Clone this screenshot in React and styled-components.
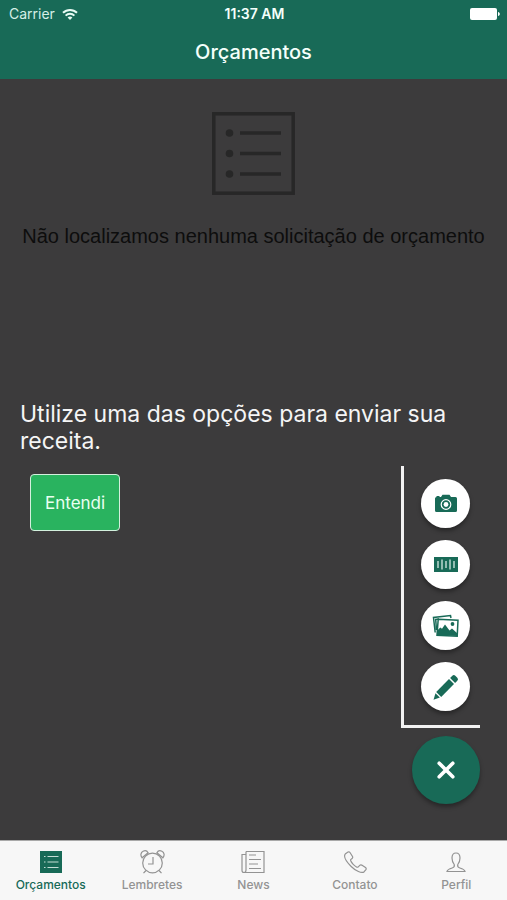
import React from "react";
import styled, { createGlobalStyle } from "styled-components";

const green = "#186a57";

const GlobalStyle = createGlobalStyle`
  *, *::before, *::after { box-sizing: border-box; }
  body { margin: 0; background: #3c3b3c; }
  body, button { font-family: Inter, "Liberation Sans", sans-serif; }
  h1, p { margin: 0; }
  svg { display: block; }
`;

const Screen = styled.div`
  min-height: 100vh;
  display: flex;
  flex-direction: column;
`;

const Header = styled.header`
  background: ${green};
  color: #f4fffb;
`;

const StatusBar = styled.div`
  height: 28px;
  padding: 0 7px 0 9px;
  display: grid;
  grid-template-columns: 1fr auto 1fr;
  align-items: center;
  font-size: 14px;
  line-height: 20px;
`;

const Carrier = styled.div`
  display: flex;
  align-items: center;
  gap: 7px;
  color: #d5efe6;
`;

const Clock = styled.time`
  font-size: 14px;
  font-weight: 600;
`;

const Battery = styled.div`
  justify-self: end;
`;

const TitleBar = styled.div`
  height: 51px;
  padding-bottom: 3px;
  display: flex;
  justify-content: center;
  align-items: center;
`;

const Title = styled.h1`
  font-size: 20px;
  line-height: 24px;
  font-weight: 500;
`;

const Main = styled.main`
  flex: 1;
  display: flex;
  flex-direction: column;
  justify-content: space-between;
  background: #3c3b3c;
`;

const EmptyState = styled.section`
  padding-top: 33px;
  display: flex;
  flex-direction: column;
  align-items: center;
  gap: 28px;
  color: #0d0d0d;
  font-family: "Liberation Sans", Arial, sans-serif;
  font-size: 20px;
  line-height: 26px;
  text-align: center;
`;

const Guide = styled.section`
  padding: 0 27px 36px 20px;
`;

const GuideText = styled.p`
  color: #f5f5f5;
  font-size: 23px;
  line-height: 27px;
`;

const Actions = styled.div`
  margin-top: 11px;
  padding-left: 10px;
  display: flex;
  justify-content: space-between;
  align-items: flex-start;
`;

const ConfirmButton = styled.button`
  margin-top: 8px;
  height: 57px;
  padding: 0 14px;
  border: 1px solid #d3f0dd;
  border-radius: 4px;
  background: #29b35f;
  color: #e9fff1;
  font-size: 17px;
  line-height: 22px;
`;

const SpeedDial = styled.div`
  display: flex;
  flex-direction: column;
  align-items: flex-end;
  gap: 8px;
`;

const Options = styled.div`
  padding: 13px 10px 14px 17px;
  border-left: 3px solid #f2f2f2;
  border-bottom: 3px solid #f2f2f2;
  display: flex;
  flex-direction: column;
  gap: 12px;
`;

const RoundButton = styled.button`
  width: ${(p) => p.$size}px;
  height: ${(p) => p.$size}px;
  padding: 0;
  border: 0;
  border-radius: 50%;
  display: grid;
  place-items: center;
  background: ${(p) => (p.$primary ? green : "#fff")};
  color: ${(p) => (p.$primary ? "#fff" : green)};
  box-shadow: 0 3px 4px rgba(0, 0, 0, 0.35);
`;

const TabBar = styled.nav`
  height: 60px;
  display: grid;
  grid-template-columns: repeat(5, 1fr);
  background: #f7f7f7;
  border-top: 1px solid #a9a9a9;
`;

const Tab = styled.a`
  padding-top: 9px;
  display: flex;
  flex-direction: column;
  align-items: center;
  gap: 3px;
  color: ${(p) => (p.$active ? green : "#939393")};
  font-size: 12px;
  line-height: 16px;
  font-weight: 500;
  text-decoration: none;
`;

const WifiIcon = () => (
  <svg width="16" height="13" viewBox="0 0 16 13" fill="none" stroke="#e8fbf4" strokeWidth="2" aria-hidden="true">
    <path d="M1 4.8C5 .9 11 .9 15 4.8M3.6 7.6c2.5-2.4 6.3-2.4 8.8 0" />
    <path d="M5.6 9.4c1.4-1.3 3.4-1.3 4.8 0L8 12z" fill="#e8fbf4" stroke="none" />
  </svg>
);

const BatteryIcon = () => (
  <svg width="30" height="12" viewBox="0 0 30 12" fill="#fff" role="img" aria-label="Bateria">
    <rect width="27" height="12" rx="2" />
    <path d="M28 4c2.4.6 2.4 3.4 0 4z" />
  </svg>
);

const EmptyListIcon = () => (
  <svg width="83" height="83" viewBox="0 0 83 83" fill="none" stroke="#272727" strokeWidth="3.500" aria-hidden="true">
    <rect x="1.8" y="1.8" width="79.4" height="79.4" />
    <path d="M28 21h41M28 41.500h41M28 62h41" />
    <g fill="#272727" stroke="none">
      <circle cx="17.500" cy="21" r="3.800" />
      <circle cx="17.500" cy="41.500" r="3.800" />
      <circle cx="17.500" cy="62" r="3.800" />
    </g>
  </svg>
);

const CameraIcon = () => (
  <svg width="24" height="20" viewBox="0 0 24 20" aria-hidden="true">
    <path fill="currentColor" d="M2.500 3V2h3v1H7l1.500-2.200h7L17 3h4.500Q23 3 23 4.500V16.500Q23 18 21.500 18h-19Q1 18 1 16.500V4.500Q1 3 2.500 3z" />
    <circle cx="12" cy="10.500" r="4.800" fill="none" stroke="#fff" strokeWidth="1.200" />
    <circle cx="12" cy="10.500" r="2.400" fill="#fff" />
  </svg>
);

const BarcodeIcon = () => (
  <svg width="24" height="15" viewBox="0 0 24 15" aria-hidden="true">
    <rect width="24" height="15" fill="currentColor" />
    <path d="M4 4v7M8 2.500v10M12 4v7M16 2.500v10M20 4v7" stroke="#d5e8e2" strokeWidth="1.300" />
  </svg>
);

const PicturesIcon = () => (
  <svg width="27" height="24" viewBox="0 0 27 24" fill="none" stroke="currentColor" strokeWidth="1.500" aria-hidden="true">
    <path d="M3.200 18.500 1.500 3.500 18.500 1.500 19 4M4.500 16 3.700 5.500 7 5" />
    <path d="M6.200 5.200 26 6.200 25.200 22.200 5 21.200z" />
    <circle cx="20.500" cy="10" r="1.900" fill="currentColor" stroke="none" />
    <path fill="currentColor" stroke="none" d="m5 21 .3-4.500 3-3 1.700 1.200L13 10.500l4.500 6 2.500-2 5.500 5-.2 2.500z" />
  </svg>
);

const PencilIcon = () => (
  <svg width="26" height="26" viewBox="0 0 26 26" fill="currentColor" aria-hidden="true">
    <path d="M19.300 1.800q1.500-1.500 3 0l2 2q1.500 1.500 0 3l-2.200 2.200-5-5z" />
    <path d="m16 5.100 5 5L8.200 22.900l-5-5z" />
    <path d="m2.500 19.200 4.400 4.400L.5 25.800z" />
  </svg>
);

const CloseIcon = () => (
  <svg width="18" height="18" viewBox="0 0 18 18" stroke="currentColor" strokeWidth="3.600" strokeLinecap="round" aria-hidden="true">
    <path d="m2.200 2.200 13.600 13.600M15.800 2.200 2.200 15.800" />
  </svg>
);

const tabSvg = {
  width: 26,
  height: 24,
  viewBox: "0 0 26 24",
  fill: "none",
  stroke: "currentColor",
  strokeWidth: 1.2,
  "aria-hidden": true,
};

const ListIcon = () => (
  <svg {...tabSvg}>
    <rect x="2" y="1" width="22" height="22" fill="currentColor" stroke="none" />
    <path d="M9.500 6.500h11M9.500 12h11M9.500 17.500h11M6 6.500h1.500M6 12h1.500M6 17.500h1.500" stroke="#c5ddd6" />
  </svg>
);

const AlarmIcon = () => (
  <svg {...tabSvg}>
    <circle cx="13.500" cy="13" r="9.800" />
    <path d="M14 7v7H9M7 20.500l-2.500 2.700M20 20.500l2.500 2.700" />
    <path d="M3.100 7.800C1.100 5.500 1.700 2.500 4.100 1.300c2-1 4-.3 5 1.500zM23.900 7.800c2-2.300 1.400-5.300-1-6.500-2-1-4-.3-5 1.500z" />
  </svg>
);

const NewsIcon = () => (
  <svg {...tabSvg}>
    <path d="M6 1.500h18v21H4q-2 0-2-2v-16h4M6 1.500v18.500q0 2.500-2 2.500" />
    <path d="M9 5h7M9 9.500h12M9 14h9M9 18.500h12" />
  </svg>
);

const PhoneIcon = () => (
  <svg {...tabSvg}>
    <path d="M3.500 3.700 6 2q1.200-.6 2 .5l2.500 4q.6 1.200-.4 2L8.700 9.600c-.6.600 1 3.200 2.500 4.700s4 3.300 4.900 2.800l1.600-1.700q.9-.9 2-.3l3.800 2.500q1.100.8.4 2l-1.700 2.100c-2.400 2.200-8.700-.9-13-5.200S1 6.500 3.500 3.700z" />
  </svg>
);

const PersonIcon = () => (
  <svg {...tabSvg}>
    <path d="M11.200 14.500C9.600 12.500 9 10.500 9 8c0-3.200 1.500-5 4-5s4 1.800 4 5c0 2.500-.6 4.500-2.200 6.500-.5 1.700.3 3 2 3.500 3.200.9 4.700 1.300 5.200 3.500H4c.5-2.200 2-2.600 5.200-3.500 1.700-.5 2.500-1.800 2-3.500z" />
  </svg>
);

const options = [
  { label: "Câmera", Icon: CameraIcon },
  { label: "Código de barras", Icon: BarcodeIcon },
  { label: "Galeria de fotos", Icon: PicturesIcon },
  { label: "Escrever", Icon: PencilIcon },
];

const tabs = [
  { label: "Orçamentos", Icon: ListIcon, active: true },
  { label: "Lembretes", Icon: AlarmIcon },
  { label: "News", Icon: NewsIcon },
  { label: "Contato", Icon: PhoneIcon },
  { label: "Perfil", Icon: PersonIcon },
];

export default function App() {
  return (
    <Screen>
      <GlobalStyle />
      <Header>
        <StatusBar>
          <Carrier>
            Carrier
            <WifiIcon />
          </Carrier>
          <Clock>11:37 AM</Clock>
          <Battery>
            <BatteryIcon />
          </Battery>
        </StatusBar>
        <TitleBar>
          <Title>Orçamentos</Title>
        </TitleBar>
      </Header>
      <Main>
        <EmptyState>
          <EmptyListIcon />
          <p>Não localizamos nenhuma solicitação de orçamento</p>
        </EmptyState>
        <Guide>
          <GuideText>Utilize uma das opções para enviar sua receita.</GuideText>
          <Actions>
            <ConfirmButton type="button">Entendi</ConfirmButton>
            <SpeedDial>
              <Options>
                {options.map(({ label, Icon }) => (
                  <RoundButton key={label} type="button" $size={49} aria-label={label}>
                    <Icon />
                  </RoundButton>
                ))}
              </Options>
              <RoundButton type="button" $size={68} $primary aria-label="Fechar">
                <CloseIcon />
              </RoundButton>
            </SpeedDial>
          </Actions>
        </Guide>
      </Main>
      <TabBar>
        {tabs.map(({ label, Icon, active }) => (
          <Tab key={label} href="#" $active={active} aria-current={active ? "page" : undefined}>
            <Icon />
            {label}
          </Tab>
        ))}
      </TabBar>
    </Screen>
  );
}
